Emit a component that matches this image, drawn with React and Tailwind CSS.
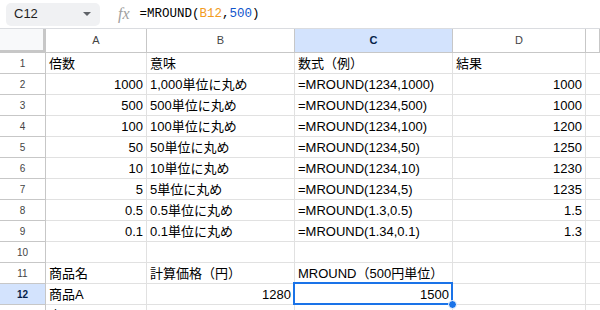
const rows = [
  ["倍数", "意味", "数式（例）", "結果"],
  ["1000", "1,000単位に丸め", "=MROUND(1234,1000)", "1000"],
  ["500", "500単位に丸め", "=MROUND(1234,500)", "1000"],
  ["100", "100単位に丸め", "=MROUND(1234,100)", "1200"],
  ["50", "50単位に丸め", "=MROUND(1234,50)", "1250"],
  ["10", "10単位に丸め", "=MROUND(1234,10)", "1230"],
  ["5", "5単位に丸め", "=MROUND(1234,5)", "1235"],
  ["0.5", "0.5単位に丸め", "=MROUND(1.3,0.5)", "1.5"],
  ["0.1", "0.1単位に丸め", "=MROUND(1.34,0.1)", "1.3"],
  ["", "", "", ""],
  ["商品名", "計算価格（円）", "MROUND（500円単位）", ""],
  ["商品A", "1280", "1500", ""],
  ["商品B", "", "", ""],
];

const isNum = (v) => /^-?[\d.]+$/.test(v);

function Cell({ value, selected }) {
  return (
    <div
      className={`relative h-[21px] border-r border-b border-[#e1e1e1] px-[3px] flex items-center text-[13px] text-[#000] whitespace-nowrap overflow-visible ${
        isNum(value) ? "justify-end" : "justify-start"
      }`}
    >
      <span className="leading-none">{value}</span>
      {selected && (
        <>
          <div className="absolute -left-[2px] -top-[2px] right-[-1px] bottom-[-1px] border-2 border-[#1a73e8] pointer-events-none" />
          <div className="absolute right-[-5px] bottom-[-5px] w-[9px] h-[9px] rounded-full bg-[#1a73e8] border border-white z-10" />
        </>
      )}
    </div>
  );
}

export default function App() {
  const cols = ["A", "B", "C", "D", ""];
  return (
    <div
      className="w-[600px] h-[310px] overflow-hidden bg-white"
      style={{ fontFamily: '"Liberation Sans", Arial, "Noto Sans CJK JP", sans-serif' }}
    >
      {/* formula bar */}
      <div className="h-[29px] border-b border-[#dadce0] flex items-center">
        <div className="ml-[6px] w-[94px] h-[23px] rounded-[5px] bg-[#f0f1f3] flex items-center justify-between pl-[8px] pr-[9px]">
          <span className="text-[13px] text-[#1f1f1f]">C12</span>
          <span className="w-0 h-0 border-l-[4px] border-r-[4px] border-t-[4px] border-l-transparent border-r-transparent border-t-[#5f6368]" />
        </div>
        <span
          className="ml-[18px] text-[16px] italic text-[#a0a0a0] leading-none"
          style={{ fontFamily: '"Liberation Serif", serif' }}
        >
          fx
        </span>
        <span
          className="ml-[10px] text-[12.5px] text-[#000]"
          style={{ fontFamily: '"Liberation Mono", "DejaVu Sans Mono", monospace' }}
        >
          =MROUND(<span className="text-[#f29c1f]">B12</span>,<span className="text-[#1155cc]">500</span>)
        </span>
      </div>

      <div className="grid grid-cols-[46px_101px_148px_158px_133px_1fr]">
        {/* header row */}
        <div className="h-[24px] bg-[#f8f9fa] border-r-[3px] border-b-[3px] border-[#c7c7c7]" />
        {cols.map((c, i) => (
          <div
            key={i}
            className={`h-[24px] border-r border-b border-[#c7c7c7] flex items-center justify-center text-[11px] ${
              c === "C" ? "bg-[#d3e3fd] text-[#041e49] font-bold" : "bg-white text-[#444]"
            }`}
          >
            {c}
          </div>
        ))}

        {rows.map((r, ri) => {
          const n = ri + 1;
          const sel = n === 12;
          return [
            <div
              key={`h${n}`}
              className={`h-[21px] border-r border-b border-[#c7c7c7] flex items-center justify-center text-[10px] ${
                sel ? "bg-[#d3e3fd] text-[#041e49] font-bold" : "bg-white text-[#444]"
              }`}
            >
              {n}
            </div>,
            ...r.map((v, ci) => <Cell key={`${n}-${ci}`} value={v} selected={sel && ci === 2} />),
            <div key={`e${n}`} className="h-[21px] border-b border-[#e1e1e1]" />,
          ];
        })}
      </div>
    </div>
  );
}
